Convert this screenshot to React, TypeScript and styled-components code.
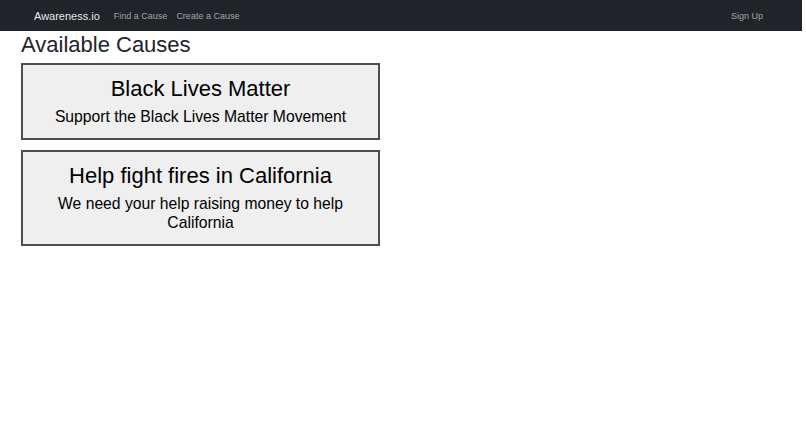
import React from "react";
import styled, { createGlobalStyle } from "styled-components";

const GlobalStyle = createGlobalStyle`
  html, body {
    margin: 0;
    padding: 0;
    background: #ffffff;
    font-family: "Liberation Sans", Arial, sans-serif;
  }
`;

const Page = styled.div`
  width: calc(100% - 4px);
`;

const NavBar = styled.nav`
  height: 31px;
  background: #212529;
  display: flex;
  align-items: center;
  padding: 0 39px 0 34px;
  box-sizing: border-box;
`;

const Brand = styled.a`
  font-size: 11px;
  color: rgba(255, 255, 255, 0.92);
  margin-right: 14px;
  text-decoration: none;
`;

const NavLinks = styled.div`
  display: flex;
  gap: 9px;
  flex: 1;
`;

const NavLink = styled.a`
  font-size: 9px;
  color: rgba(255, 255, 255, 0.58);
  text-decoration: none;
`;

const Main = styled.main`
  padding: 1px 21px 0;
`;

const Heading = styled.h2`
  margin: 0 0 5px;
  font-size: 22px;
  line-height: 26px;
  font-weight: 400;
  color: #212529;
`;

const CardList = styled.div`
  display: flex;
  flex-direction: column;
  gap: 10px;
  width: 359px;
`;

const Card = styled.div`
  background: #efefef;
  border: 2px solid #4d4d4d;
  padding: 11px 10px 12px;
  text-align: center;
  color: #000;
`;

const CardTitle = styled.h3`
  margin: 0 0 5px;
  font-size: 22px;
  line-height: 26px;
  font-weight: 400;
`;

const CardText = styled.p`
  margin: 0;
  font-size: 15.7px;
  line-height: 19px;
`;

const causes = [
  {
    title: "Black Lives Matter",
    text: "Support the Black Lives Matter Movement",
  },
  {
    title: "Help fight fires in California",
    text: "We need your help raising money to help California",
  },
];

export default function App() {
  return (
    <>
      <GlobalStyle />
      <Page>
        <NavBar>
          <Brand>Awareness.io</Brand>
          <NavLinks>
            <NavLink>Find a Cause</NavLink>
            <NavLink>Create a Cause</NavLink>
          </NavLinks>
          <NavLink>Sign Up</NavLink>
        </NavBar>
        <Main>
          <Heading>Available Causes</Heading>
          <CardList>
            {causes.map((c) => (
              <Card key={c.title}>
                <CardTitle>{c.title}</CardTitle>
                <CardText>{c.text}</CardText>
              </Card>
            ))}
          </CardList>
        </Main>
      </Page>
    </>
  );
}
